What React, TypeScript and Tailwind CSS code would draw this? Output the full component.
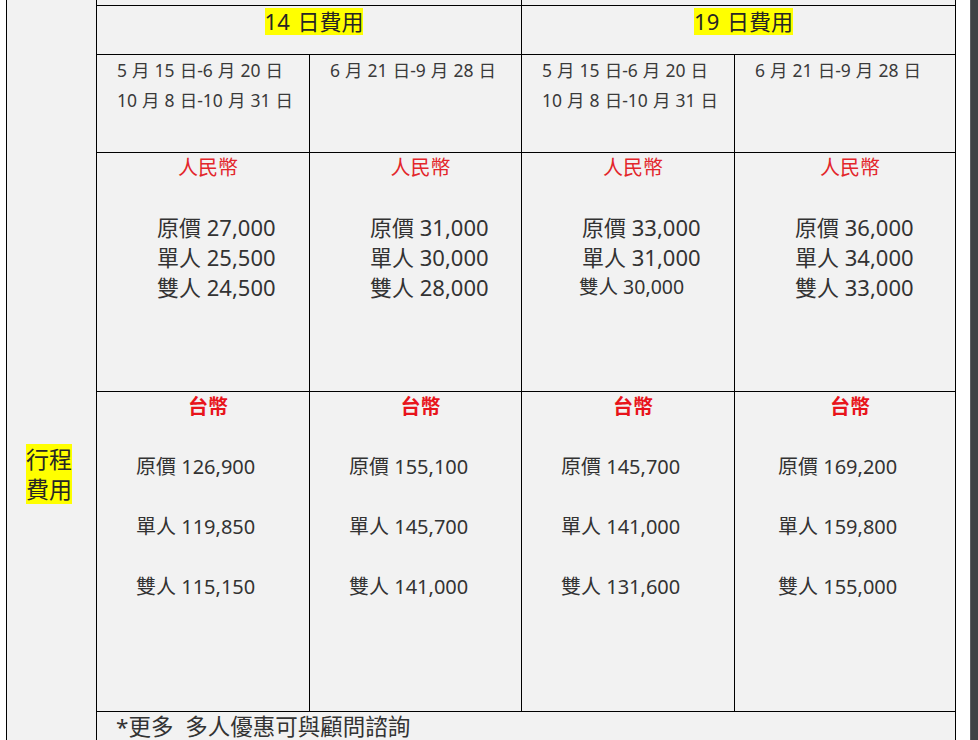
type PriceCol = {
  dates: string[];
  rmb: string[];
  twd: string[];
  rmbPad: string;
  twdPad: string;
  last?: boolean;
};

const labels = ["原價", "單人", "雙人"];

const cols: PriceCol[] = [
  {
    dates: ["5 月 15 日-6 月 20 日", "10 月 8 日-10 月 31 日"],
    rmb: ["27,000", "25,500", "24,500"],
    twd: ["126,900", "119,850", "115,150"],
    rmbPad: "pl-[60px]",
    twdPad: "pl-[39px]",
  },
  {
    dates: ["6 月 21 日-9 月 28 日"],
    rmb: ["31,000", "30,000", "28,000"],
    twd: ["155,100", "145,700", "141,000"],
    rmbPad: "pl-[60px]",
    twdPad: "pl-[39px]",
  },
  {
    dates: ["5 月 15 日-6 月 20 日", "10 月 8 日-10 月 31 日"],
    rmb: ["33,000", "31,000", "30,000"],
    twd: ["145,700", "141,000", "131,600"],
    rmbPad: "pl-[60px]",
    twdPad: "pl-[39px]",
  },
  {
    dates: ["6 月 21 日-9 月 28 日"],
    rmb: ["36,000", "34,000", "33,000"],
    twd: ["169,200", "159,800", "155,000"],
    rmbPad: "pl-[60px]",
    twdPad: "pl-[43px]",
    last: true,
  },
];

const font = "font-['Noto_Sans','Noto_Sans_CJK_TC',sans-serif]";

export default function App() {
  return (
    <div className={`flex h-[740px] w-[978px] overflow-hidden bg-white text-[#333] ${font}`}>
      <div className="w-[6px] shrink-0" />
      <div className="grid h-[771px] w-[950px] shrink-0 grid-cols-[90px_213px_212px_213px_222px] grid-rows-[5px_49px_98px_239px_320px_60px] bg-[#f2f2f2]">
        {/* left label cell */}
        <div className="row-span-6 flex justify-center border-l border-black pt-[444px] pr-[5px]">
          <span className="inline-block self-start bg-[#ffff00] text-[23px] leading-[30px] text-[#262626]">
            行程
            <br />
            費用
          </span>
        </div>

        {/* tail of the row above */}
        <div className="col-span-2 border-l border-black" />
        <div className="col-span-2 border-x border-black" />

        {/* duration headers */}
        {["14 日費用", "19 日費用"].map((t, i) => (
          <div
            key={t}
            className={`col-span-2 border-l border-t border-black pt-[2px] pl-[10px] text-center ${i === 1 ? "border-r" : ""}`}
          >
            <span className="inline-block bg-[#ffff00] text-[22px] leading-[27px] text-[#262626] [word-spacing:2px]">
              {t}
            </span>
          </div>
        ))}

        {/* date ranges */}
        {cols.map((c, i) => (
          <div
            key={`d${i}`}
            className={`border-l border-t border-black pl-[20px] text-[17.5px] leading-[30px] text-[#3a3a3a] [word-spacing:0.5px] ${c.last ? "border-r" : ""}`}
          >
            {c.dates.map((d) => (
              <div key={d}>{d}</div>
            ))}
          </div>
        ))}

        {/* RMB */}
        {cols.map((c, i) => (
          <div
            key={`r${i}`}
            className={`border-l border-t border-black ${c.last ? "border-r" : ""}`}
          >
            <div className="pl-[10px] text-center text-[20px] leading-[30px] text-[#e3262b]">
              人民幣
            </div>
            <div className={`mt-[29px] ${c.rmbPad} text-[22px] leading-[30px]`}>
              {c.rmb.map((v, j) =>
                i === 2 && j === 2 ? (
                  <div key={j} className="-ml-[3px] text-[19.5px]">
                    {labels[j]} {v}
                  </div>
                ) : (
                  <div key={j}>
                    {labels[j]} {v}
                  </div>
                ),
              )}
            </div>
          </div>
        ))}

        {/* TWD */}
        {cols.map((c, i) => (
          <div
            key={`t${i}`}
            className={`border-l border-t border-black ${c.last ? "border-r" : ""}`}
          >
            <div className="pl-[10px] text-center text-[20px] font-bold leading-[30px] text-[#e8141b]">
              台幣
            </div>
            <div className={`mt-[15px] ${c.twdPad} text-[20px] leading-[60px]`}>
              {c.twd.map((v, j) => (
                <div key={j}>
                  {labels[j]} {v}
                </div>
              ))}
            </div>
          </div>
        ))}

        {/* footer note */}
        <div className="col-span-4 border-x border-t border-black pl-[19px] text-[22.5px] leading-[29px] [word-spacing:6px]">
          *更多 多人優惠可與顧問諮詢
        </div>
      </div>
      <div className="w-[14px] shrink-0" />
      <div className="w-[8px] shrink-0 border-l border-[#5a5d60] bg-[#3f4245]" />
    </div>
  );
}
